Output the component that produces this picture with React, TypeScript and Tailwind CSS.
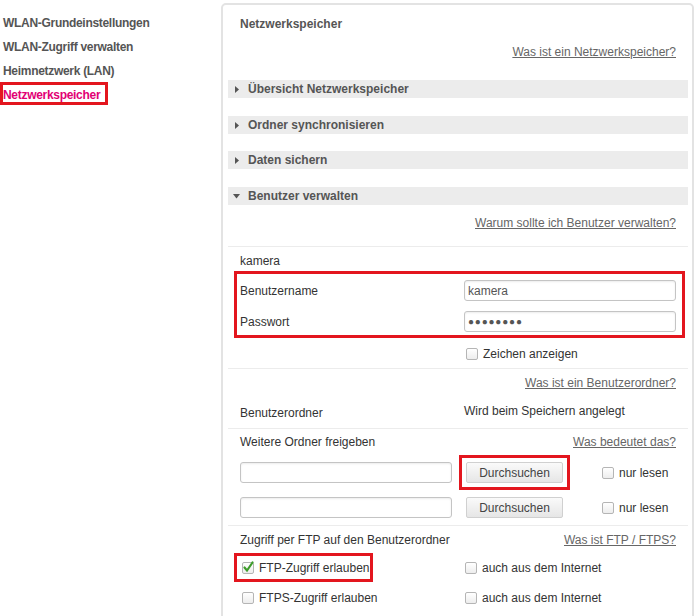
import React, { ReactNode } from 'react';

const font = { fontFamily: '"Liberation Sans", Arial, sans-serif' };

const NavItem: React.FC<{ children: ReactNode; active?: boolean }> = ({ children, active }) => (
  <div className="h-6 flex items-center tracking-[-0.3px]">
    {active ? (
      <span className="relative pl-[3px] text-[#e20074]">
        {children}
        <span className="absolute left-0 -top-[4px] w-[108px] h-[23px] border-[3px] border-[#e3161e]" />
      </span>
    ) : (
      <span className="pl-[3px]">{children}</span>
    )}
  </div>
);

const Arrow: React.FC<{ open?: boolean }> = ({ open }) =>
  open ? (
    <svg width="7" height="5" viewBox="0 0 7 5" className="ml-[5px] mr-[8px] mt-[1px]">
      <path d="M0 0 L7 0 L3.5 4.5 Z" fill="#555" />
    </svg>
  ) : (
    <svg width="4" height="7" viewBox="0 0 4 7" className="ml-[7px] mr-[9px]">
      <path d="M0 0 L4 3.5 L0 7 Z" fill="#555" />
    </svg>
  );

const Bar: React.FC<{ children: ReactNode; open?: boolean; className?: string }> = ({ children, open, className = '' }) => (
  <div className={`ml-[5px] mr-[4px] h-[18px] bg-[#ececec] flex items-center font-bold text-[#555] ${className}`}>
    <Arrow open={open} />
    {children}
  </div>
);

const HelpLink: React.FC<{ children: ReactNode; className?: string }> = ({ children, className = '' }) => (
  <div className={`h-5 flex items-center justify-end pr-[16px] ${className}`}>
    <a className="underline text-[#666]">{children}</a>
  </div>
);

const Sep: React.FC<{ className?: string }> = ({ className = '' }) => (
  <div className={`ml-[5px] mr-[4px] h-px bg-[#ececec] ${className}`} />
);

const Check: React.FC<{ checked?: boolean }> = ({ checked }) => (
  <span className="relative inline-block w-[12px] h-[12px] rounded-[2px] border border-[#b5b5b5] bg-gradient-to-b from-white to-[#ededed] shrink-0">
    {checked && (
      <svg width="12" height="12" viewBox="0 0 12 12" className="absolute -left-px -top-[2px]">
        <path d="M2.5 6.5 L5 9.5 L10.5 1.5" stroke="#3e9c2c" strokeWidth="2.2" fill="none" strokeLinecap="round" />
      </svg>
    )}
  </span>
);

const CheckLabel: React.FC<{ children: ReactNode; checked?: boolean }> = ({ children, checked }) => (
  <label className="flex items-center gap-[5px] whitespace-nowrap">
    <Check checked={checked} />
    <span>{children}</span>
  </label>
);

const TextBox: React.FC<{ children?: ReactNode; className?: string }> = ({ children, className = '' }) => (
  <div className={`w-[212px] h-[21px] border border-[#c4c4c4] rounded-[3px] bg-white shadow-[inset_0_1px_2px_rgba(0,0,0,0.08)] flex items-center px-[3px] text-[#555] ${className}`}>
    {children}
  </div>
);

const Button: React.FC<{ children: ReactNode }> = ({ children }) => (
  <div className="w-[97px] h-[21px] border border-[#d0d0d0] rounded-[2px] bg-gradient-to-b from-[#fafafa] to-[#e6e6e6] flex items-center justify-center text-[#444]">
    {children}
  </div>
);

const Mark: React.FC<{ children: ReactNode; on?: boolean; className?: string }> = ({ children, on, className = '' }) => (
  <div className={`border-[3px] ${on ? 'border-[#e3161e]' : 'border-transparent'} ${className}`}>{children}</div>
);

export default function App() {
  return (
    <div style={font} className="w-[700px] h-[616px] overflow-hidden bg-white text-[12px] text-[#333] flex">
      <nav className="w-[221px] shrink-0 pt-[11px] font-bold text-[#555]">
        <NavItem>WLAN-Grundeinstellungen</NavItem>
        <NavItem>WLAN-Zugriff verwalten</NavItem>
        <NavItem>Heimnetzwerk (LAN)</NavItem>
        <NavItem active>Netzwerkspeicher</NavItem>
      </nav>

      <main className="mt-[3px] w-[473px] h-[640px] border-2 border-[#e3e3e3] rounded-[5px] pt-[9px]">
        <div className="h-5 flex items-center pl-[17px] font-bold text-[#555]">Netzwerkspeicher</div>
        <HelpLink className="mt-[8px]">Was ist ein Netzwerkspeicher?</HelpLink>

        <Bar className="mt-[18px]">Übersicht Netzwerkspeicher</Bar>
        <Bar className="mt-[18px]">Ordner synchronisieren</Bar>
        <Bar className="mt-[17px]">Daten sichern</Bar>
        <Bar className="mt-[18px]" open>Benutzer verwalten</Bar>

        <HelpLink className="mt-[8px]">Warum sollte ich Benutzer verwalten?</HelpLink>
        <Sep className="mt-[13px]" />

        <div className="h-5 mt-[4px] flex items-center pl-[17px]">kamera</div>

        <Mark on className="ml-[11px] mr-[7px] pl-[3px] pr-[6px] pt-[6px] pb-[3px]">
          <div className="flex items-center h-[21px]">
            <span className="w-[224px]">Benutzername</span>
            <TextBox>kamera</TextBox>
          </div>
          <div className="flex items-center h-[21px] mt-[10px]">
            <span className="w-[224px]">Passwort</span>
            <TextBox className="text-[#444] text-[10px] tracking-[0.8px]">●●●●●●●●</TextBox>
          </div>
        </Mark>

        <div className="h-5 mt-[6px] flex items-center pl-[243px]">
          <CheckLabel>Zeichen anzeigen</CheckLabel>
        </div>
        <Sep className="mt-[4px]" />

        <HelpLink className="mt-[4px]">Was ist ein Benutzerordner?</HelpLink>
        <div className="h-5 mt-[8px] flex items-center pl-[17px]">
          <span className="w-[224px] pt-[4px]">Benutzerordner</span>
          <span>Wird beim Speichern angelegt</span>
        </div>
        <Sep className="mt-[7px]" />

        <div className="h-5 mt-[3px] flex items-center justify-between pl-[17px] pr-[16px]">
          <span>Weitere Ordner freigeben</span>
          <a className="underline text-[#666]">Was bedeutet das?</a>
        </div>

        <div className="mt-[3px]">
          {[true, false].map((on, i) => (
            <div key={i} className="flex items-center pl-[17px]">
              <TextBox />
              <Mark on={on} className="ml-[7px] px-[4px] py-[4px]">
                <Button>Durchsuchen</Button>
              </Mark>
              <div className="ml-[32px]">
                <CheckLabel>nur lesen</CheckLabel>
              </div>
            </div>
          ))}
        </div>
        <Sep />

        <div className="h-5 mt-[4px] flex items-center justify-between pl-[17px] pr-[16px]">
          <span>Zugriff per FTP auf den Benutzerordner</span>
          <a className="underline text-[#666]">Was ist FTP / FTPS?</a>
        </div>

        <div className="mt-[3px]">
          {[
            ['FTP-Zugriff erlauben', true],
            ['FTPS-Zugriff erlauben', false],
          ].map(([label, on], i) => (
            <div key={i} className={`flex items-center ${i ? 'mt-px' : ''}`}>
              <Mark on={on as boolean} className="ml-[11px] w-[139px] h-[29px] pl-[5px] flex items-center">
                <CheckLabel checked={on as boolean}>{label as string}</CheckLabel>
              </Mark>
              <div className="ml-[92px]">
                <CheckLabel>auch aus dem Internet</CheckLabel>
              </div>
            </div>
          ))}
        </div>
      </main>
    </div>
  );
}
